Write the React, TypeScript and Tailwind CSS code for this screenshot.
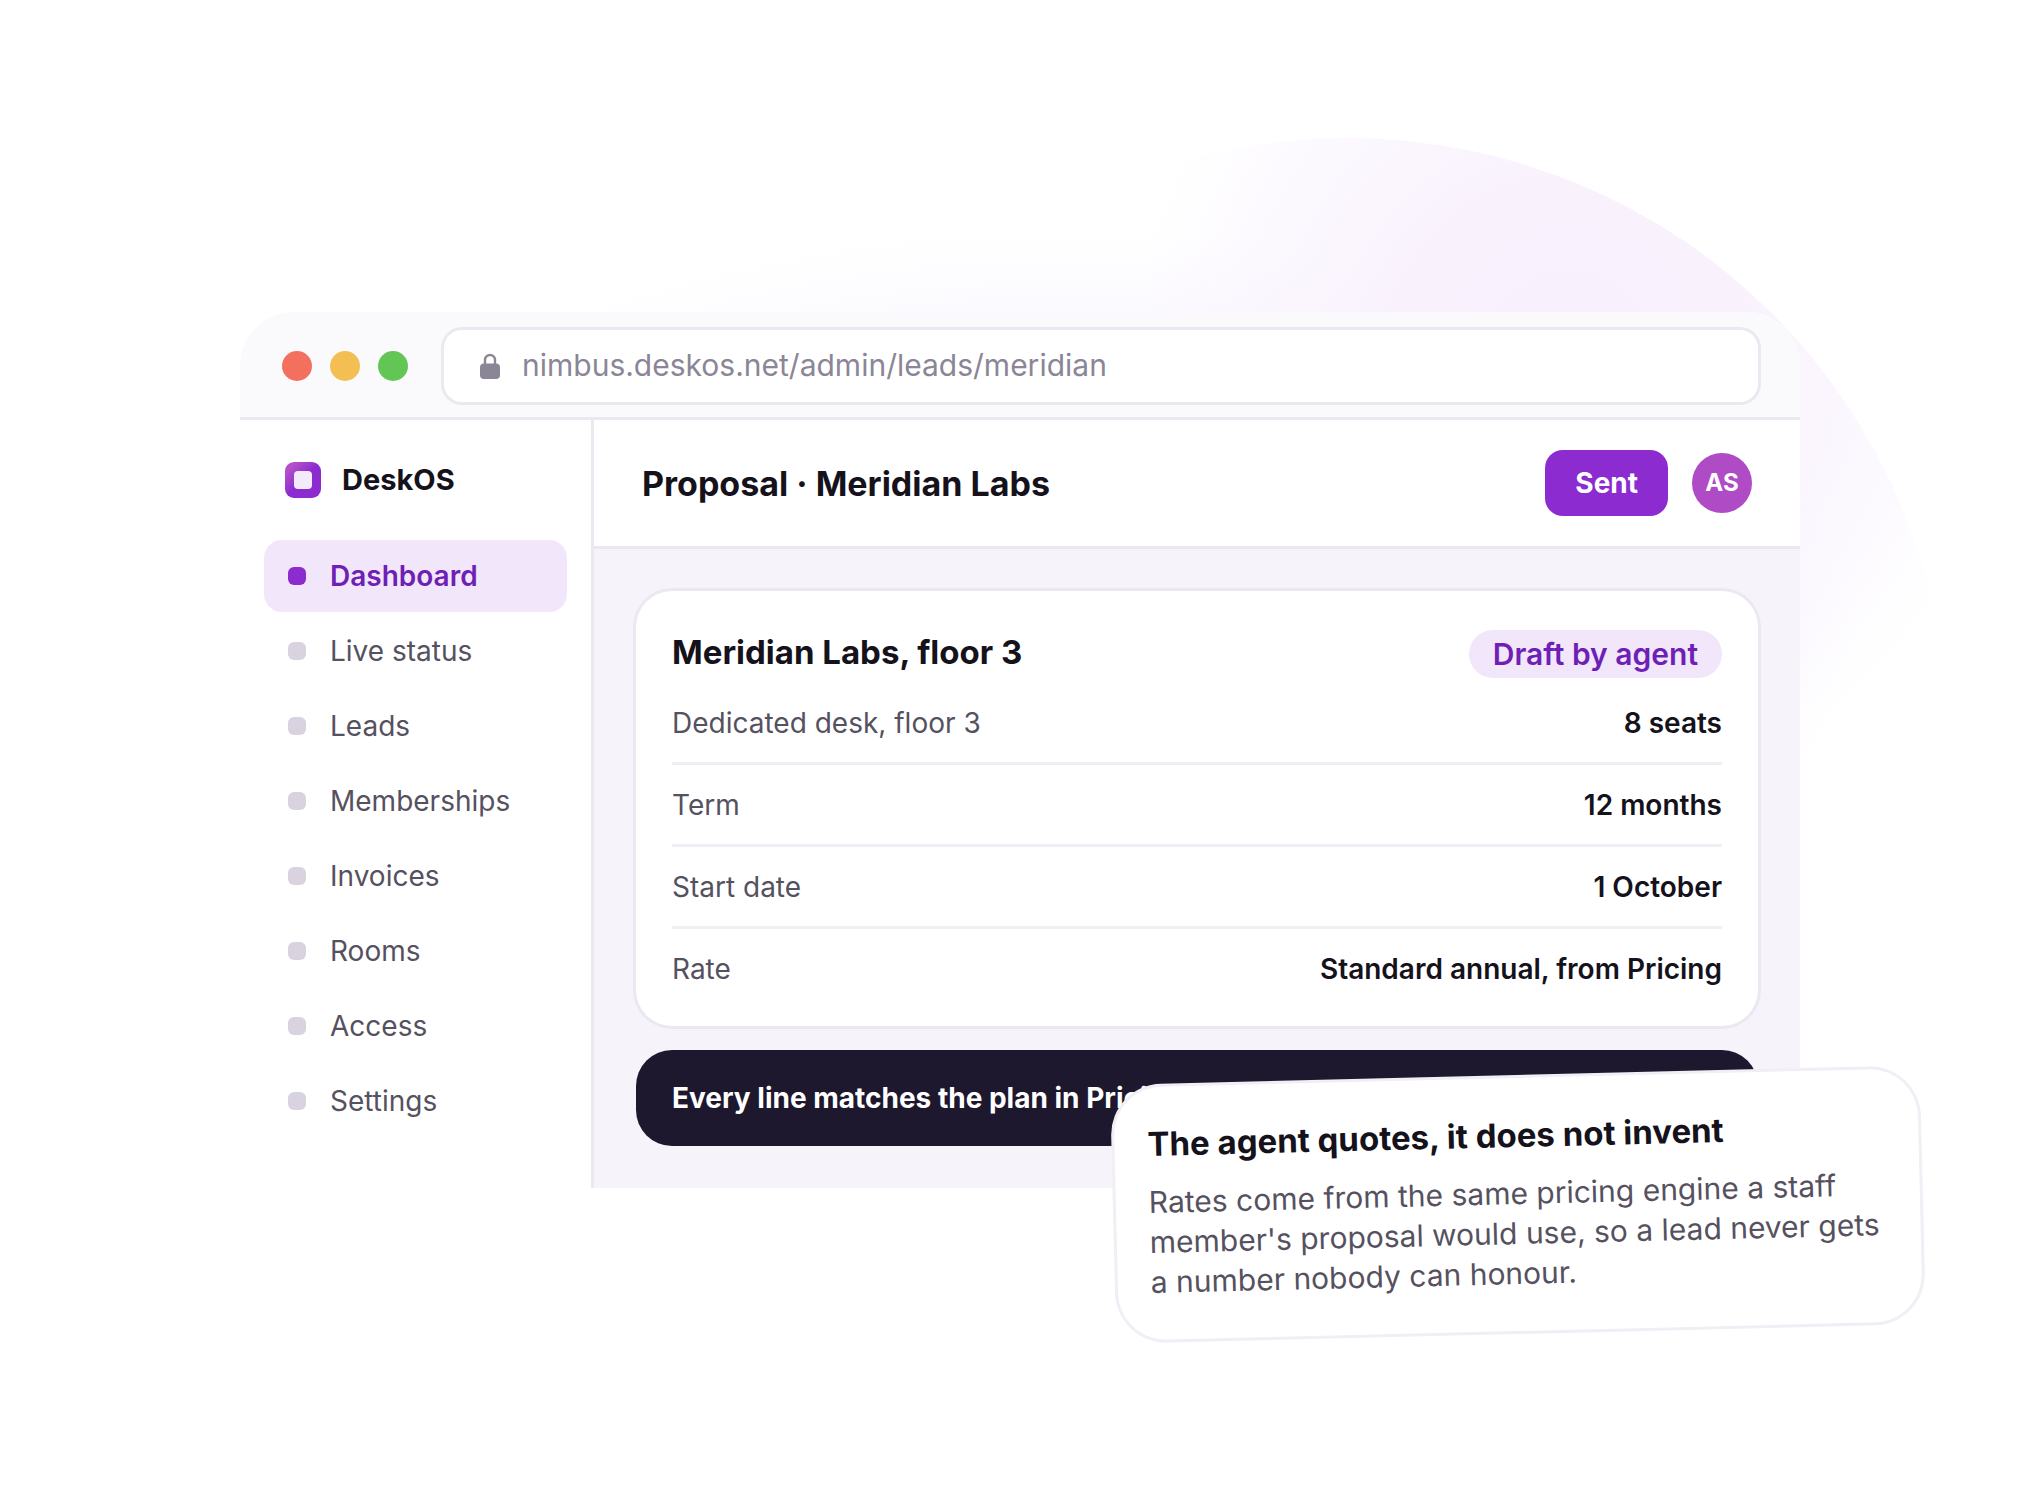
const navItems = ["Dashboard", "Live status", "Leads", "Memberships", "Invoices", "Rooms", "Access", "Settings"];

const terms = [
  { label: "Dedicated desk, floor 3", value: "8 seats" },
  { label: "Term", value: "12 months" },
  { label: "Start date", value: "1 October" },
  { label: "Rate", value: "Standard annual, from Pricing" },
];

function Glow() {
  return (
    <svg className="pointer-events-none absolute inset-0 h-[1500px] w-[2040px]" viewBox="0 0 2040 1500" aria-hidden="true">
      <defs>
        <radialGradient id="glowA" gradientUnits="userSpaceOnUse" cx="1570" cy="360" r="440">
          <stop offset="0" stopColor="#f8f0fd" />
          <stop offset="0.4" stopColor="#f9f2fd" />
          <stop offset="1" stopColor="#f8f1fe" stopOpacity="0" />
        </radialGradient>
        <radialGradient id="glowB" gradientUnits="userSpaceOnUse" cx="0" cy="0" r="1" gradientTransform="translate(1060 630) scale(800 400)">
          <stop offset="0" stopColor="#ece4fb" />
          <stop offset="1" stopColor="#ece4fb" stopOpacity="0" />
        </radialGradient>
      </defs>
      <ellipse cx="1060" cy="630" rx="800" ry="400" fill="url(#glowB)" />
      <circle cx="1348" cy="738" r="600" fill="url(#glowA)" />
    </svg>
  );
}

function Lock() {
  return (
    <svg className="h-[27px] w-5 shrink-0" viewBox="0 0 20 27" fill="none" aria-hidden="true">
      <path d="M5 12V7a5 5 0 0 1 10 0v5" stroke="#8b8696" strokeWidth="2.4" />
      <rect x="0" y="10.5" width="20" height="15.5" rx="4" fill="#8b8696" />
    </svg>
  );
}

function Logo() {
  return (
    <span className="grid size-9 place-items-center rounded-[9px] bg-linear-135 from-[#b44fc8] from-15% to-[#8b2bd0] to-50%">
      <span className="size-[18px] rounded-sm bg-[#f3eafb]" />
    </span>
  );
}

function Sidebar() {
  return (
    <aside className="w-[354px] shrink-0 border-r-[3px] border-[#ebe8f2] bg-white px-6 pt-[42px]">
      <div className="flex h-9 items-center gap-[21px] pl-[21px]">
        <Logo />
        <span className="text-[29px] font-bold leading-9">DeskOS</span>
      </div>
      <nav className="mt-[42px] flex flex-col gap-[3px]">
        {navItems.map((item, i) => (
          <a
            key={item}
            href="#"
            aria-current={i === 0 ? "page" : undefined}
            className={
              i === 0
                ? "flex h-[72px] items-center gap-6 rounded-[18px] bg-[#f1e6fa] px-6 text-[28px] font-semibold text-[#6f1fb3]"
                : "flex h-[72px] items-center gap-6 rounded-[18px] px-6 text-[28px] text-[#56515f]"
            }
          >
            <span className={i === 0 ? "size-[18px] rounded-md bg-[#8b2bd0]" : "size-[18px] rounded-md bg-[#d8d3df]"} />
            {item}
          </a>
        ))}
      </nav>
    </aside>
  );
}

export default function App() {
  return (
    <div className="relative min-h-screen overflow-hidden bg-white px-60 pt-[312px] font-['Inter',sans-serif] text-[#15121c]">
      <Glow />
      <div className="relative">
        <div className="overflow-hidden rounded-[54px] bg-white">
          <div className="flex items-center gap-9 border-b-[3px] border-[#ebe8f2] bg-[#fafafc] px-[42px] pt-[18px] pb-[15px]">
            <div className="flex gap-[18px]">
              <span className="size-[30px] rounded-full bg-[#f36f5e]" />
              <span className="size-[30px] rounded-full bg-[#f4bf52]" />
              <span className="size-[30px] rounded-full bg-[#62c655]" />
            </div>
            <label className="flex h-[72px] flex-1 items-center gap-[22px] rounded-[18px] bg-white px-9 ring-3 ring-[#ebe8f2]">
              <Lock />
              <input
                type="text"
                aria-label="Address"
                defaultValue="nimbus.deskos.net/admin/leads/meridian"
                className="min-w-0 flex-1 bg-transparent pb-0.5 text-[30px] text-[#8b8696] outline-none"
              />
            </label>
          </div>
          <div className="flex">
            <Sidebar />
            <main className="min-w-0 flex-1 bg-[#f6f4fa]">
              <header className="flex h-[129px] items-center justify-between border-b-[3px] border-[#ebe8f2] bg-white px-12">
                <h1 className="text-[34px] font-bold">Proposal · Meridian Labs</h1>
                <div className="flex items-center gap-6">
                  <button type="button" className="h-[66px] rounded-[18px] bg-[#8b2bd0] px-[30px] text-[28px] font-bold text-white">
                    Sent
                  </button>
                  <span className="grid size-[60px] place-items-center rounded-full bg-[#b04bc6] text-2xl font-bold text-white">AS</span>
                </div>
              </header>
              <div className="flex flex-col gap-6 p-[42px]">
                <section className="rounded-[36px] bg-white px-9 pt-[39px] pb-[15px] ring-3 ring-[#ebe8f2]">
                  <div className="mb-[5px] flex h-12 items-center justify-between">
                    <h2 className="pb-0.5 text-[33px] font-bold">Meridian Labs, floor 3</h2>
                    <span className="flex h-12 items-center rounded-full bg-[#f1e6fa] px-6 text-[30px] font-semibold text-[#6f1fb3]">Draft by agent</span>
                  </div>
                  <dl>
                    {terms.map((t) => (
                      <div key={t.label} className="flex h-[82px] items-center justify-between border-b-[3px] border-[#f1eff5] text-[28px] last:border-transparent">
                        <dt className="text-[#56515f]">{t.label}</dt>
                        <dd className="font-semibold">{t.value}</dd>
                      </div>
                    ))}
                  </dl>
                </section>
                <p className="flex h-24 items-center rounded-[36px] bg-[#1e182e] px-9 text-[28px] font-bold text-white">Every line matches the plan in Pricing</p>
              </div>
            </main>
          </div>
        </div>
        <aside className="absolute top-[766px] -right-[120px] w-[804px] -rotate-[1.4deg] rounded-[48px] bg-white px-[33px] pt-[35px] pb-[38px] ring-3 ring-[#f1eff5]">
          <h3 className="text-[33px] leading-[45px] font-bold">The agent quotes, it does not invent</h3>
          <p className="mt-[15px] text-[30px] leading-10 text-[#56515f]">
            Rates come from the same pricing engine a staff member's proposal would use, so a lead never gets a number nobody can honour.
          </p>
        </aside>
      </div>
    </div>
  );
}
